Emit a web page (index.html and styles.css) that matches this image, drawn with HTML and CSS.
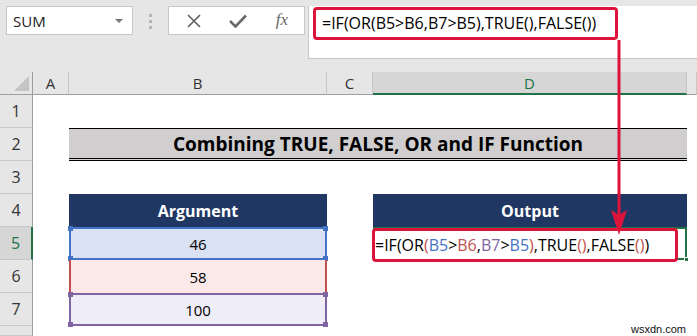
FILE: index.html
```html
<!DOCTYPE html>
<html lang="en">
<head>
    <meta charset="UTF-8">
    <title>Combining TRUE, FALSE, OR and IF Function</title>
    <link rel="stylesheet" href="styles.css">
</head>
<body>
<div class="app">

    <!-- Formula bar -->
    <div class="toolbar">
        <div class="name-box">
            <span>SUM</span>
            <span class="caret"></span>
        </div>
        <div class="grip"><i></i><i></i><i></i></div>
        <div class="fx-box">
            <svg width="14" height="14" viewBox="0 0 14 14"><path d="M1 1 L13 13 M13 1 L1 13" stroke="#5f5f5f" stroke-width="1.6" fill="none"/></svg>
            <svg width="18" height="14" viewBox="0 0 18 14"><path d="M1 7 L6.5 12.5 L17 1.5" stroke="#6a6a6a" stroke-width="2.6" fill="none"/></svg>
            <span class="fx">fx</span>
        </div>
        <div class="formula-bar">
            <span class="hl-box top">=IF(OR(B5&gt;B6,B7&gt;B5),TRUE(),FALSE())</span>
        </div>
    </div>

    <!-- Sheet -->
    <div class="sheet">
        <div class="ch corner"><span class="tri"></span></div>
        <div class="ch">A</div>
        <div class="ch">B</div>
        <div class="ch">C</div>
        <div class="ch active">D</div>
        <div class="ch"></div>

        <div class="rh">1</div>
        <div class="span5"></div>

        <div class="rh">2</div>
        <div></div>
        <div class="title">Combining TRUE, FALSE, OR and IF Function</div>
        <div></div>

        <div class="rh">3</div>
        <div class="span5"></div>

        <div class="rh">4</div>
        <div></div>
        <div class="head">Argument</div>
        <div></div>
        <div class="head">Output</div>
        <div></div>

        <div class="rh active">5</div>
        <div></div>
        <div class="val blue">46<i class="h tl"></i><i class="h tr"></i><i class="h bl"></i><i class="h br"></i></div>
        <div></div>
        <div class="sel">
            <span class="hl-box cell">=IF(OR<span class="p">(</span><span class="b">B5</span>&gt;<span class="r">B6</span>,<span class="v">B7</span>&gt;<span class="b">B5</span><span class="p">)</span>,TRUE<span class="p">()</span>,FALSE<span class="p">()</span>)</span>
            <i class="fill-handle"></i>
        </div>
        <div></div>

        <div class="rh">6</div>
        <div></div>
        <div class="val red">58</div>
        <div></div>
        <div></div>
        <div></div>

        <div class="rh">7</div>
        <div></div>
        <div class="val purple">100<i class="h tl"></i><i class="h tr"></i><i class="h bl"></i><i class="h br"></i></div>
        <div></div>
        <div></div>
        <div></div>

        <div class="rh"></div>
        <div class="span5"></div>
    </div>

    <!-- callout arrow -->
    <svg class="arrow" width="20" height="200" viewBox="0 0 20 200">
        <path d="M10 0 L10 180" stroke="#dc143c" stroke-width="3" fill="none"/>
        <path d="M2 170 L10 195 L18 170 L10 175 Z" fill="#dc143c"/>
    </svg>

    <div class="mark">wsxdn.com</div>
</div>
</body>
</html>
```

FILE: styles.css
```css
* {
    margin: 0;
    padding: 0;
    box-sizing: border-box;
}

body {
    font-family: 'Open Sans', 'Noto Sans', sans-serif;
    background: #fff;
    color: #000;
}

.app {
    position: relative;
    width: 697px;
    height: 336px;
    overflow: hidden;
}

/* ---------- toolbar ---------- */

.toolbar {
    display: flex;
    align-items: flex-start;
    height: 72px;
    padding: 6px 0 0 6px;
    background: #e6e6e6;
}

.name-box {
    width: 127px;
    height: 29px;
    border: 1px solid #c6c6c6;
    background: #fff;
    display: flex;
    align-items: center;
    justify-content: space-between;
    padding: 0 9px 0 6px;
    font-size: 15px;
    color: #222;
}

.caret {
    width: 0;
    height: 0;
    border-left: 4px solid transparent;
    border-right: 4px solid transparent;
    border-top: 4px solid #777;
}

.grip {
    display: flex;
    flex-direction: column;
    gap: 3px;
    margin: 8px 0 0 16px;
}

.grip i {
    width: 3px;
    height: 3px;
    background: #b5b5b5;
}

.fx-box {
    width: 137px;
    height: 29px;
    margin-left: 16px;
    border: 1px solid #c6c6c6;
    background: #fff;
    display: flex;
    align-items: center;
    justify-content: space-between;
    padding: 0 16px 0 18px;
}

.fx {
    font-family: 'Liberation Serif', serif;
    font-style: italic;
    font-size: 17px;
    color: #6a6a6a;
    margin-top: -2px;
}

.formula-bar {
    flex: 1;
    height: 53px;
    margin-left: 3px;
    border-left: 1px solid #c6c6c6;
    border-bottom: 1px solid #c6c6c6;
    background: #fff;
    padding: 1px 0 0 4px;
}

.hl-box {
    display: flex;
    align-items: center;
    border: 3px solid #dc143c;
    border-radius: 4px;
    white-space: nowrap;
}

.hl-box.top {
    width: 305px;
    height: 33px;
    padding: 0 0 2px 6px;
    font-size: 16px;
}

/* ---------- sheet ---------- */

.sheet {
    display: grid;
    grid-template-columns: 33px 36px 258px 46px 314px 1fr;
    grid-template-rows: 23px repeat(7, 33px) 1fr;
    height: 264px;
}

.ch {
    background: #e6e6e6;
    border-right: 1px solid #c6c6c6;
    border-bottom: 1px solid #9e9e9e;
    display: flex;
    align-items: center;
    justify-content: center;
    font-size: 15px;
    color: #333;
}

.ch.corner {
    position: relative;
    border-right-color: #9e9e9e;
}

.tri {
    position: absolute;
    right: 3px;
    bottom: 3px;
    width: 0;
    height: 0;
    border-left: 15px solid transparent;
    border-bottom: 15px solid #c4c4c4;
}

.ch.active {
    background: #d6d6d6;
    border-bottom: 2px solid #217346;
    color: #217346;
}

.rh {
    background: #e6e6e6;
    border-right: 1px solid #9e9e9e;
    border-bottom: 1px solid #c8c8c8;
    display: flex;
    align-items: center;
    justify-content: center;
    font-size: 16px;
    color: #333;
}

.rh.active {
    background: #d6d6d6;
    border-right: 2px solid #217346;
    color: #217346;
}

.span5 {
    grid-column: span 5;
}

.title {
    grid-column: span 3;
    background: #d0cece;
    border-top: 1px solid #000;
    border-bottom: 3px double #000;
    display: flex;
    align-items: center;
    justify-content: center;
    font-size: 19px;
    font-weight: bold;
}

.head {
    background: #203764;
    color: #fff;
    display: flex;
    align-items: center;
    justify-content: center;
    font-size: 16px;
    font-weight: bold;
}

.val {
    position: relative;
    display: flex;
    align-items: center;
    justify-content: center;
    font-size: 15px;
}

.val.blue {
    background: #d9e1f2;
    border: 2px solid #4472c4;
}

.val.red {
    background: #fbe9e9;
    border-left: 2px solid #c0504d;
    border-right: 2px solid #c0504d;
}

.val.purple {
    background: #efedf7;
    border: 2px solid #8064a2;
}

.h {
    position: absolute;
    width: 5px;
    height: 5px;
}

.blue .h { background: #4472c4; }
.purple .h { background: #8064a2; }

.tl { left: -3px; top: -3px; }
.tr { right: -3px; top: -3px; }
.bl { left: -3px; bottom: -3px; }
.br { right: -3px; bottom: -3px; }

.sel {
    position: relative;
    border: 2px solid #217346;
}

.hl-box.cell {
    position: absolute;
    left: -3px;
    top: -1px;
    width: 306px;
    height: 34px;
    padding-left: 0;
    background: #fff;
    font-size: 16px;
}

.fill-handle {
    position: absolute;
    right: -4px;
    bottom: -4px;
    width: 5px;
    height: 5px;
    background: #217346;
    border: 1px solid #fff;
}

.b { color: #4472c4; }
.r { color: #c0504d; }
.v { color: #8064a2; }
.p { color: #c0504d; }

/* ---------- overlays ---------- */

.arrow {
    position: absolute;
    left: 609px;
    top: 40px;
}

.mark {
    position: absolute;
    right: 11px;
    bottom: 1px;
    font-family: 'Liberation Sans', sans-serif;
    font-size: 11px;
    color: #111;
}
```
